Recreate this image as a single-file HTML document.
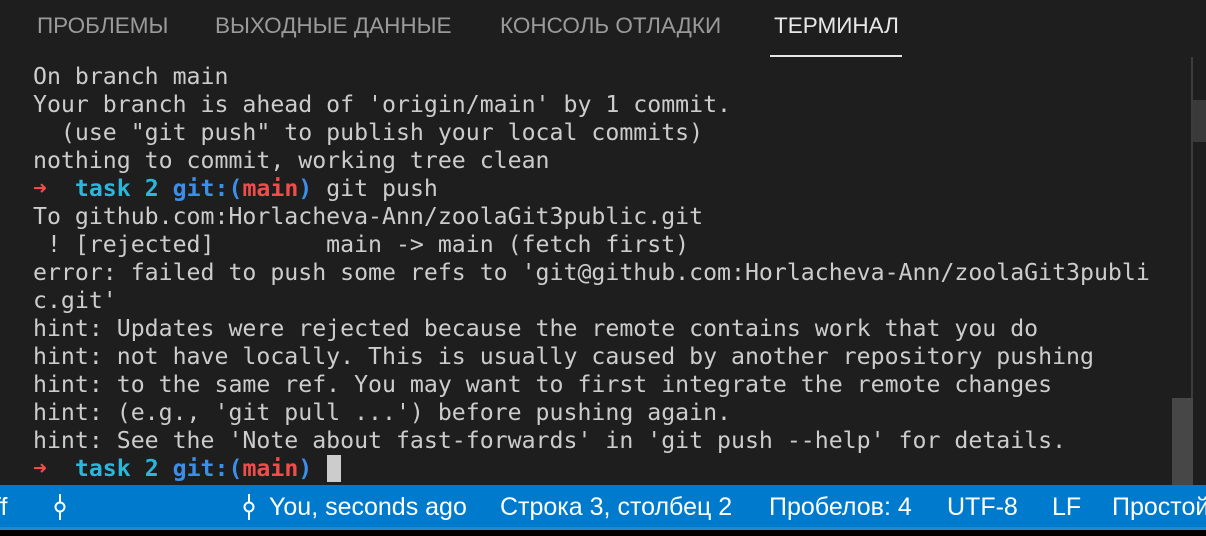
<!DOCTYPE html>
<html><head><meta charset="utf-8"><style>
body{margin:0;width:1206px;height:536px;background:#1e1e1e;overflow:hidden;position:relative;font-family:"Liberation Sans","DejaVu Sans",sans-serif}
.tab{position:absolute;top:13px;font-size:22.5px;color:#9a9a9a;white-space:nowrap}
.term{position:absolute;left:33px;top:63px;font-family:"DejaVu Sans Mono","Liberation Mono",monospace;font-size:23.2px;line-height:28px;color:#cccccc;white-space:pre;margin:0}
.r{color:#f14c4c}.c{color:#29b8db;font-weight:bold}.b{color:#3b8eea;font-weight:bold}.m{color:#f14c4c;font-weight:bold}
.sb{position:absolute;left:0;top:485px;width:1206px;height:42px;background:#007acc}
.st{position:absolute;top:8px;font-size:25px;color:#fff;white-space:nowrap}
</style></head><body>
<div class="tab" style="left:37px">ПРОБЛЕМЫ</div>
<div class="tab" style="left:215px">ВЫХОДНЫЕ ДАННЫЕ</div>
<div class="tab" style="left:500px">КОНСОЛЬ ОТЛАДКИ</div>
<div class="tab" style="left:774px;color:#e7e7e7">ТЕРМИНАЛ</div>
<div style="position:absolute;left:770px;top:55px;width:132px;height:2px;background:#e7e7e7"></div>
<div style="position:absolute;left:1191px;top:57px;width:2px;height:428px;background:#3c3c3c"></div>
<div style="position:absolute;left:1193px;top:100px;width:13px;height:42px;background:#3a3a3a"></div>
<div style="position:absolute;left:1172px;top:398px;width:21px;height:87px;background:#474747"></div>
<pre class="term">On branch main
Your branch is ahead of 'origin/main' by 1 commit.
  (use "git push" to publish your local commits)
nothing to commit, working tree clean
<span class="r">➜</span>  <span class="c">task 2</span> <span class="b">git:(</span><span class="m">main</span><span class="b">)</span> git push
To github.com:Horlacheva-Ann/zoolaGit3public.git
 ! [rejected]        main -&gt; main (fetch first)
error: failed to push some refs to 'git@github.com:Horlacheva-Ann/zoolaGit3publi
c.git'
hint: Updates were rejected because the remote contains work that you do
hint: not have locally. This is usually caused by another repository pushing
hint: to the same ref. You may want to first integrate the remote changes
hint: (e.g., 'git pull ...') before pushing again.
hint: See the 'Note about fast-forwards' in 'git push --help' for details.
<span class="r">➜</span>  <span class="c">task 2</span> <span class="b">git:(</span><span class="m">main</span><span class="b">)</span> </pre>
<div style="position:absolute;left:327px;top:455px;width:14px;height:27px;background:#cccccc"></div>
<div class="sb">
<div class="st" style="left:-6px">ff</div>
<svg style="position:absolute;left:52px;top:9px" width="16" height="26" viewBox="0 0 16 26"><line x1="8" y1="0" x2="8" y2="8" stroke="#fff" stroke-width="2"/><circle cx="8" cy="13" r="4.5" fill="none" stroke="#fff" stroke-width="2"/><line x1="8" y1="18" x2="8" y2="26" stroke="#fff" stroke-width="2"/></svg>
<svg style="position:absolute;left:241px;top:9px" width="16" height="26" viewBox="0 0 16 26"><line x1="8" y1="0" x2="8" y2="8" stroke="#fff" stroke-width="2"/><circle cx="8" cy="13" r="4.5" fill="none" stroke="#fff" stroke-width="2"/><line x1="8" y1="18" x2="8" y2="26" stroke="#fff" stroke-width="2"/></svg>
<div class="st" style="left:269px">You, seconds ago</div>
<div class="st" style="left:500px">Строка 3, столбец 2</div>
<div class="st" style="left:769px">Пробелов: 4</div>
<div class="st" style="left:947px">UTF-8</div>
<div class="st" style="left:1052px">LF</div>
<div class="st" style="left:1112px">Простой</div>
</div>
<div style="position:absolute;left:0;top:527px;width:1206px;height:3px;background:#1f8ad2"></div>
<div style="position:absolute;left:0;top:530px;width:1206px;height:6px;background:#000"></div>
</body></html>
